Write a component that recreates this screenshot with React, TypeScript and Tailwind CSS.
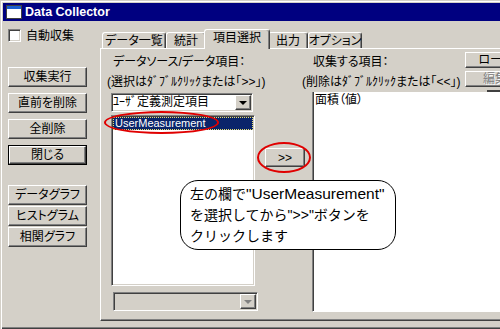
const ui =
  "font-[family-name:'Liberation_Sans','Noto_Sans_CJK_JP',sans-serif] [font-feature-settings:'palt'] text-[12px] leading-[14px] text-black";
const raised =
  "border border-t-white border-l-white border-r-[#404040] border-b-[#404040] shadow-[inset_-1px_-1px_0_#808080]";
const sunken =
  "border border-t-[#808080] border-l-[#808080] border-r-white border-b-white shadow-[inset_1px_1px_0_#404040,inset_-1px_-1px_0_#d4d0c8]";
const tabBase =
  "bg-[#d4d0c8] border-t border-l border-r border-t-white border-l-white border-r-[#404040] rounded-t-[3px] shadow-[inset_-1px_0_0_#808080] flex justify-center pt-[1px] whitespace-nowrap";

function Btn({ label, isDefault = false, className = "" }: { label: string; isDefault?: boolean; className?: string }) {
  if (isDefault) {
    return (
      <div className={`w-[79px] h-[20px] border border-black ${className}`}>
        <div className={`h-full flex items-center justify-center ${raised}`}>{label}</div>
      </div>
    );
  }
  return <div className={`w-[79px] h-[20px] flex items-center justify-center ${raised} ${className}`}>{label}</div>;
}

function DropArrow({ disabled = false }: { disabled?: boolean }) {
  return (
    <div className={`w-[16px] h-[15px] bg-[#d4d0c8] flex items-center justify-center shrink-0 ${raised}`}>
      <div
        className={`w-0 h-0 border-x-[4px] border-t-[4px] border-x-transparent ${
          disabled ? "border-t-[#808080]" : "border-t-black"
        }`}
      />
    </div>
  );
}

const tabs = [
  { label: "データ一覧", cls: "w-[64px] h-[16px]" },
  { label: "統計", cls: "w-[40px] h-[16px]" },
  { label: "項目選択", cls: "w-[66px] h-[20px] ml-[-2px] mb-[-1px] relative z-10" },
  { label: "出力", cls: "w-[40px] h-[16px] ml-[-2px]" },
  { label: "オプション", cls: "w-[54px] h-[16px]" },
];

export default function App() {
  return (
    <div
      className={`relative w-[500px] h-[329px] overflow-hidden bg-[#d4d0c8] pl-[3px] pt-[3px] pb-[3px] flex flex-col shadow-[inset_1px_1px_0_#d4d0c8,inset_2px_2px_0_#ffffff,inset_0_-1px_0_#404040,inset_0_-2px_0_#808080] ${ui}`}
    >
      {/* title bar */}
      <div className="h-[18px] shrink-0 bg-[#000080] flex items-center pl-[3px]">
        <div className="w-[16px] h-[14px] bg-white border border-[#404040] flex flex-col">
          <div className="h-[3px] bg-[#1c5fd0]" />
        </div>
        <span className="ml-[3px] text-white font-bold text-[12.5px] font-[family-name:'Liberation_Sans',sans-serif]">
          Data Collector
        </span>
      </div>

      <div className="flex-1 flex min-h-0">
        {/* left column */}
        <div className="w-[97px] shrink-0 flex flex-col pl-[5px]">
          <div className="mt-[8px] flex items-center gap-[5px] h-[13px]">
            <div className={`w-[13px] h-[13px] bg-white ${sunken}`} />
            <span>自動収集</span>
          </div>
          <Btn label="収集実行" className="mt-[25px]" />
          <Btn label="直前を削除" className="mt-[6px]" />
          <Btn label="全削除" className="mt-[6px]" />
          <Btn label="閉じる" isDefault className="mt-[6px]" />
          <Btn label="データグラフ" className="mt-[20px]" />
          <Btn label="ヒストグラム" className="mt-[1px]" />
          <Btn label="相関グラフ" className="mt-[1px]" />
        </div>

        {/* tab control */}
        <div className="flex-1 min-w-0 flex flex-col">
          <div className="h-[27px] shrink-0 flex items-end pl-[2px]">
            {tabs.map((t) => (
              <div key={t.label} className={`${tabBase} ${t.cls}`}>
                {t.label}
              </div>
            ))}
          </div>

          <div className="w-[420px] h-[273px] shrink-0 bg-[#d4d0c8] border-t border-l border-b border-t-white border-l-white border-b-[#404040] shadow-[inset_0_-1px_0_#808080] flex">
            {/* source column */}
            <div className="w-[158px] shrink-0 pl-[6px] flex flex-col">
              <div className="ml-[6px] mt-[6px] whitespace-nowrap">データソース/データ項目：</div>
              <div className="mt-[6px] whitespace-nowrap">(選択はﾀﾞﾌﾞﾙｸﾘｯｸまたは｢&gt;&gt;｣)</div>
              <div className={`mt-[4px] ml-[4px] w-[142px] h-[19px] bg-white p-[1px] flex items-center justify-between ${sunken}`}>
                <span className="leading-[15px] whitespace-nowrap">ﾕｰｻﾞ定義測定項目</span>
                <DropArrow />
              </div>
              <div className={`mt-[3px] ml-[4px] w-[144px] h-[171px] bg-white p-[1px] ${sunken}`}>
                <div className="h-[13px] bg-[#0a246a] text-white pl-[2px] text-[11px] leading-[13px] outline-1 outline-dotted outline-[#e8e070] -outline-offset-1">
                  UserMeasurement
                </div>
              </div>
              <div className={`mt-[6px] ml-[6px] w-[145px] h-[19px] p-[1px] flex justify-end ${sunken}`}>
                <DropArrow disabled />
              </div>
            </div>

            {/* move button */}
            <div className="w-[53px] shrink-0">
              <div className={`mt-[99px] ml-[6px] w-[40px] h-[19px] flex items-center justify-center ${raised}`}>
                &gt;&gt;
              </div>
            </div>

            {/* target column */}
            <div className="flex-1 min-w-0 flex flex-col">
              <div className="h-[43px] shrink-0 flex">
                <div className="w-[153px] shrink-0 flex flex-col">
                  <div className="ml-[1px] mt-[6px] whitespace-nowrap">収集する項目：</div>
                  <div className="ml-[-10px] mt-[6px] whitespace-nowrap">(削除はﾀﾞﾌﾞﾙｸﾘｯｸまたは｢&lt;&lt;｣)</div>
                </div>
                <div className="flex flex-col pt-[3px]">
                  <div className={`w-[60px] h-[16px] flex items-center justify-center ${raised}`}>ロード</div>
                  <div
                    className={`mt-[3px] w-[60px] h-[16px] flex items-center justify-center text-[#808080] [text-shadow:1px_1px_0_#fff] ${raised}`}
                  >
                    編集
                  </div>
                  <div className="mt-[3px] ml-[22px] w-[40px] h-[2px] bg-[#404040]" />
                </div>
              </div>
              <div className="w-[200px] h-[220px] bg-white border-l border-b border-l-[#808080] border-b-white shadow-[inset_1px_0_0_#404040] pl-[2px] pt-[1px]">
                面積（値）
              </div>
            </div>
          </div>
        </div>
      </div>

      {/* annotations */}
      <div className="absolute left-[104px] top-[111px] w-[115px] h-[23px] border-2 border-[#e00000] rounded-[50%]" />
      <div className="absolute left-[257px] top-[142px] w-[54px] h-[31px] border-2 border-[#e00000] rounded-[50%]" />
      <div className="absolute left-[180px] top-[180px] w-[216px] h-[70px] rounded-[18px] border border-black bg-white pl-[9px] pt-[2px] text-[14px] leading-[21px] font-[family-name:'Liberation_Sans','Noto_Sans_CJK_JP',sans-serif] [font-feature-settings:normal] whitespace-nowrap">
        <div>
          左の欄で<span className="text-[15.5px]">"UserMeasurement"</span>
        </div>
        <div>を選択してから"&gt;&gt;"ボタンを</div>
        <div>クリックします</div>
      </div>
    </div>
  );
}
